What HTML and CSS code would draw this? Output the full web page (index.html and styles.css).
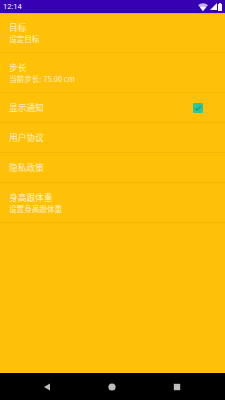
FILE: index.html
```html
<!DOCTYPE html>
<html>
<head>
<meta charset="utf-8">
<link rel="stylesheet" href="styles.css">
</head>
<body>
<div class="screen">
  <div class="statusbar">
    <span class="time">12:14</span>
    <div class="sicons">
      <svg width="10" height="8" viewBox="0 0 10 8"><path d="M5 8 L0 2 Q5 -1.5 10 2 Z" fill="#fff" opacity="0.7"/><path d="M5 8 L2 4.4 Q5 2.6 8 4.4 Z" fill="#fff"/></svg>
      <svg width="7" height="7" viewBox="0 0 7 7"><path d="M0 7 L7 0 L7 7 Z" fill="#fff"/></svg>
      <svg width="4" height="8" viewBox="0 0 4 8"><rect x="1" y="0" width="2" height="1" fill="#fff"/><rect x="0" y="1" width="4" height="7" fill="#fff"/></svg>
    </div>
  </div>
  <div class="list">
    <div class="pref two">
      <div class="title">目标</div>
      <div class="summary">设定目标</div>
    </div>
    <div class="pref two">
      <div class="title">步长</div>
      <div class="summary">当前步长: 75.00 cm</div>
    </div>
    <div class="pref one row">
      <div class="title">显示通知</div>
      <div class="check">
        <svg width="10" height="10" viewBox="0 0 10 10"><rect width="10" height="10" rx="1" fill="#27c8a0"/><path d="M2.3 5.2 L4.2 7 L7.8 3.2" stroke="#1a9e86" stroke-width="1.3" fill="none"/></svg>
      </div>
    </div>
    <div class="pref one">
      <div class="title">用户协议</div>
    </div>
    <div class="pref one">
      <div class="title">隐私政策</div>
    </div>
    <div class="pref two">
      <div class="title">身高跟体重</div>
      <div class="summary">设置身高跟体重</div>
    </div>
  </div>
  <div class="navbar">
    <svg width="8" height="8" viewBox="0 0 8 8"><path d="M7 0.5 L7 7.5 L1 4 Z" fill="#bdbdbd"/></svg>
    <svg width="8" height="8" viewBox="0 0 8 8"><circle cx="4" cy="4" r="3.6" fill="#bdbdbd"/></svg>
    <svg width="8" height="8" viewBox="0 0 8 8"><rect x="0.8" y="0.8" width="6.4" height="6.4" fill="#bdbdbd"/></svg>
  </div>
</div>
</body>
</html>
```
FILE: styles.css
```css
html, body {
  margin: 0;
  padding: 0;
}
body {
  width: 225px;
  height: 400px;
  overflow: hidden;
  font-family: "Noto Sans CJK SC", Roboto, sans-serif;
}
.screen {
  width: 225px;
  height: 400px;
  display: flex;
  flex-direction: column;
  background: #ffc107;
}
.statusbar {
  height: 13px;
  flex: none;
  background: #3700b3;
  display: flex;
  align-items: center;
  justify-content: space-between;
  padding: 0 3px 0 3px;
  box-sizing: border-box;
  box-shadow: 0 1px 0 #f5a80a;
}
.time {
  font-family: Roboto, sans-serif;
  font-size: 7.5px;
  color: #fff;
  line-height: 13px;
}
.sicons {
  display: flex;
  align-items: center;
  gap: 1.5px;
}
.list {
  flex: 1;
  display: flex;
  flex-direction: column;
}
.pref {
  box-sizing: border-box;
  padding-left: 9px;
  padding-right: 9px;
  border-bottom: 1px solid rgba(160, 100, 0, 0.1);
  color: rgba(255, 255, 255, 0.8);
}
.pref.two {
  height: 40px;
  padding-top: 9px;
}
.pref.one {
  height: 30px;
  display: flex;
  align-items: center;
}
.pref.row {
  justify-content: space-between;
}
.title {
  font-size: 8.7px;
  line-height: 11px;
}
.summary {
  font-size: 7.6px;
  line-height: 12px;
}
.check {
  display: flex;
  margin-right: 13px;
}
.navbar {
  height: 27px;
  flex: none;
  background: #000;
  display: flex;
  align-items: center;
  justify-content: space-between;
  padding: 0 44px 0 43px;
}
```
